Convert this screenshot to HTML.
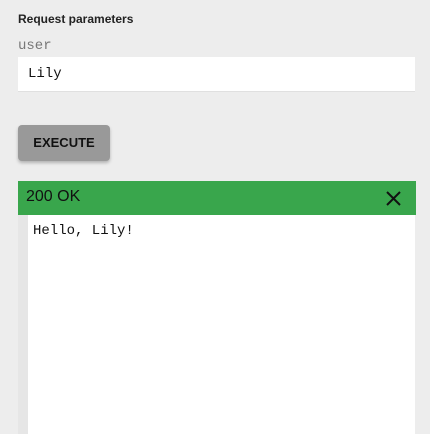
<!DOCTYPE html>
<html><head><style>
body{margin:0;width:430px;height:434px;background:#ededed;font-family:"Liberation Sans",sans-serif;position:relative;overflow:hidden}
.m{font-family:"Liberation Mono","Courier New",Courier,monospace}
.t{position:absolute;left:18px;top:12px;font-size:12px;font-weight:bold;color:#222}
.u{position:absolute;left:18px;top:38px;font-size:14px;color:#777}
.in{position:absolute;left:18px;top:57px;width:397px;height:35px;background:#fff;border-bottom:1px solid #e0e0e0;box-sizing:border-box}
.in span{position:absolute;left:10px;top:9px;font-size:14px;color:#111}
.b{position:absolute;left:18px;top:125px;width:92px;height:36px;background:#999;border-radius:4px;box-shadow:0 2px 3px rgba(0,0,0,.25);font-size:13px;font-weight:bold;color:#111;text-align:center;line-height:36px}
.g{position:absolute;left:18px;top:181px;width:398px;height:34px;background:#39a64c}
.g span{position:absolute;left:8px;top:7px;font-size:16px;color:#111}
.s{position:absolute;left:18px;top:215px;width:10px;height:219px;background:#e6e6e6}
.w{position:absolute;left:28px;top:215px;width:387px;height:219px;background:#fff}
.w span{position:absolute;left:5px;top:8px;font-size:14px;color:#111}
</style></head><body>
<div class="t">Request parameters</div>
<div class="u m">user</div>
<div class="in"><span class="m">Lily</span></div>
<div class="b">EXECUTE</div>
<div class="g"><span>200 OK</span>
<svg style="position:absolute;left:368px;top:10px" width="15" height="15" viewBox="0 0 15 15"><path d="M1 1L14 14M14 1L1 14" stroke="#111" stroke-width="2"/></svg></div>
<div class="s"></div>
<div class="w"><span class="m">Hello, Lily!</span></div>
</body></html>
